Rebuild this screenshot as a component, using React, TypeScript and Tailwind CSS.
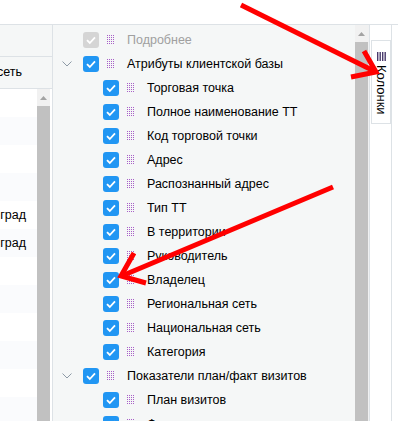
import React from "react";

type Col = { name: string; level: 0 | 1; group?: boolean; disabled?: boolean };

const columns: Col[] = [
     { name: "Подробнее", level: 0, disabled: true },
     { name: "Атрибуты клиентской базы", level: 0, group: true },
     { name: "Торговая точка", level: 1 },
     { name: "Полное наименование ТТ", level: 1 },
     { name: "Код торговой точки", level: 1 },
     { name: "Адрес", level: 1 },
     { name: "Распознанный адрес", level: 1 },
     { name: "Тип ТТ", level: 1 },
     { name: "В территории", level: 1 },
     { name: "Руководитель", level: 1 },
     { name: "Владелец", level: 1 },
     { name: "Региональная сеть", level: 1 },
     { name: "Национальная сеть", level: 1 },
     { name: "Категория", level: 1 },
     { name: "Показатели план/факт визитов", level: 0, group: true },
     { name: "План визитов", level: 1 },
     { name: "Факт визитов", level: 1 },
];

const gridRows = ["", "", "", "", "Калининград", "Калининград", "", "", "", "", "", ""];

function Checkbox({ disabled }: { disabled?: boolean }) {
     return (
          <span
               className={`flex h-4 w-4 shrink-0 items-center justify-center rounded-[3px] ${
                    disabled ? "bg-[#d5d5d5]" : "bg-[#2196f3]"
               }`}
          >
               <svg width="12" height="12" viewBox="0 0 12 12" fill="none">
                    <path d="M2 6.2 L4.8 9 L10 3.4" stroke="white" strokeWidth="1.8" />
               </svg>
          </span>
     );
}

function Grip() {
     const dots = [];
     for (let c = 0; c < 4; c++) {
          for (let r = 0; r < 5; r++) {
               dots.push(<rect key={`${c}-${r}`} x={c * 2} y={r * 2} width="1" height="1" fill="#a860c8" />);
          }
     }
     return (
          <svg width="8" height="10" viewBox="0 0 8 10" className="block shrink-0">
               {dots}
          </svg>
     );
}

function UpArrow() {
     return (
          <svg width="7" height="4" viewBox="0 0 7 4">
               <path d="M0 4 L3.5 0 L7 4 Z" fill="#a3a3a3" />
          </svg>
     );
}

export default function App() {
     return (
          <div className="relative h-[421px] w-[398px] overflow-hidden bg-white font-['Liberation_Sans',Arial,sans-serif] text-[12.5px] text-black">
               <div className="h-[25px] border-b border-[#dde2e6]" />

               <div className="flex h-[396px]">
                    {/* таблица слева */}
                    <div className="flex w-[53px] shrink-0 flex-col border-r border-[#dde2e6]">
                         <div className="h-[32px] border-b border-[#dde2e6] bg-[#f5f7f7]" />
                         <div className="flex h-[32px] items-center overflow-hidden border-b border-[#dde2e6] bg-[#f5f7f7]">
                              <div className="flex w-[22px] justify-end whitespace-nowrap">Национальная сеть</div>
                         </div>
                         <div className="flex flex-1 overflow-hidden">
                              <div className="flex w-[37px] flex-col overflow-hidden">
                                   {gridRows.map((r, i) => (
                                        <div
                                             key={i}
                                             className={`flex h-[28px] shrink-0 items-center ${i % 2 ? "bg-[#fafbfd]" : "bg-white"}`}
                                        >
                                             <div className="flex w-[26px] justify-end whitespace-nowrap">{r}</div>
                                        </div>
                                   ))}
                              </div>
                              <div className="flex w-[13px] flex-col">
                                   <div className="flex h-[17px] items-center justify-center bg-[#f1f1f1]">
                                        <UpArrow />
                                   </div>
                                   <div className="flex-1 bg-[#c1c1c1]" />
                              </div>
                         </div>
                    </div>

                    {/* панель колонок */}
                    <div className="flex w-[302px] shrink-0 flex-col overflow-hidden bg-[#f5f7f7] pt-[3px]">
                         {columns.map((c) => (
                              <div
                                   key={c.name}
                                   className={`flex h-6 shrink-0 items-center whitespace-nowrap ${
                                        c.level === 1 ? "pl-[50px]" : c.group ? "pl-[9px]" : "pl-[30px]"
                                   }`}
                              >
                                   {c.group && (
                                        <svg width="10" height="6" viewBox="0 0 10 6" className="mr-[11px] shrink-0">
                                             <path d="M0.5 0.5 L5 5 L9.5 0.5" stroke="#8d9aa6" fill="none" />
                                        </svg>
                                   )}
                                   <Checkbox disabled={c.disabled} />
                                   <span className="ml-[8px]">
                                        <Grip />
                                   </span>
                                   <span className={`ml-[12px] ${c.disabled ? "text-[#a0a0a0]" : ""}`}>{c.name}</span>
                              </div>
                         ))}
                    </div>
                    <div className="flex w-[13px] shrink-0 flex-col">
                         <div className="flex h-[17px] items-center justify-center bg-[#f1f1f1]">
                              <UpArrow />
                         </div>
                         <div className="flex-1 bg-[#c1c1c1]" />
                    </div>
                    <div className="w-[2px] shrink-0 border-r border-[#dde2e6] bg-[#f0f1f2]" />

                    {/* боковая панель */}
                    <div className="w-[22px] shrink-0 border-r border-[#dde2e6] pt-[15px] pl-[1px]">
                         <div className="flex h-[84px] flex-col items-center border border-[#dde2e6] bg-white pt-[11px]">
                              <svg width="9" height="9" viewBox="0 0 9 9">
                                   <rect x="0" y="0" width="1.4" height="9" fill="#4a3a6c" />
                                   <rect x="2.5" y="0" width="1.4" height="9" fill="#4a3a6c" />
                                   <rect x="5" y="0" width="1.4" height="9" fill="#4a3a6c" />
                                   <rect x="7.5" y="0" width="1.4" height="9" fill="#4a3a6c" />
                              </svg>
                              <span className="mt-[4px] text-[13px] leading-none [writing-mode:vertical-rl]">Колонки</span>
                         </div>
                    </div>
               </div>

               {/* красные стрелки поверх */}
               <svg className="pointer-events-none absolute left-0 top-0" width="398" height="421" viewBox="0 0 398 421">
                    <g stroke="#ff0000" strokeWidth="5" fill="none">
                         <line x1="241" y1="5" x2="374" y2="71" />
                         <polyline points="364,51 376,72 351,77" strokeLinejoin="miter" />
                         <line x1="333" y1="187" x2="124" y2="275" />
                         <polyline points="134,253 121,276 146,283" strokeLinejoin="miter" />
                    </g>
               </svg>
          </div>
     );
}
